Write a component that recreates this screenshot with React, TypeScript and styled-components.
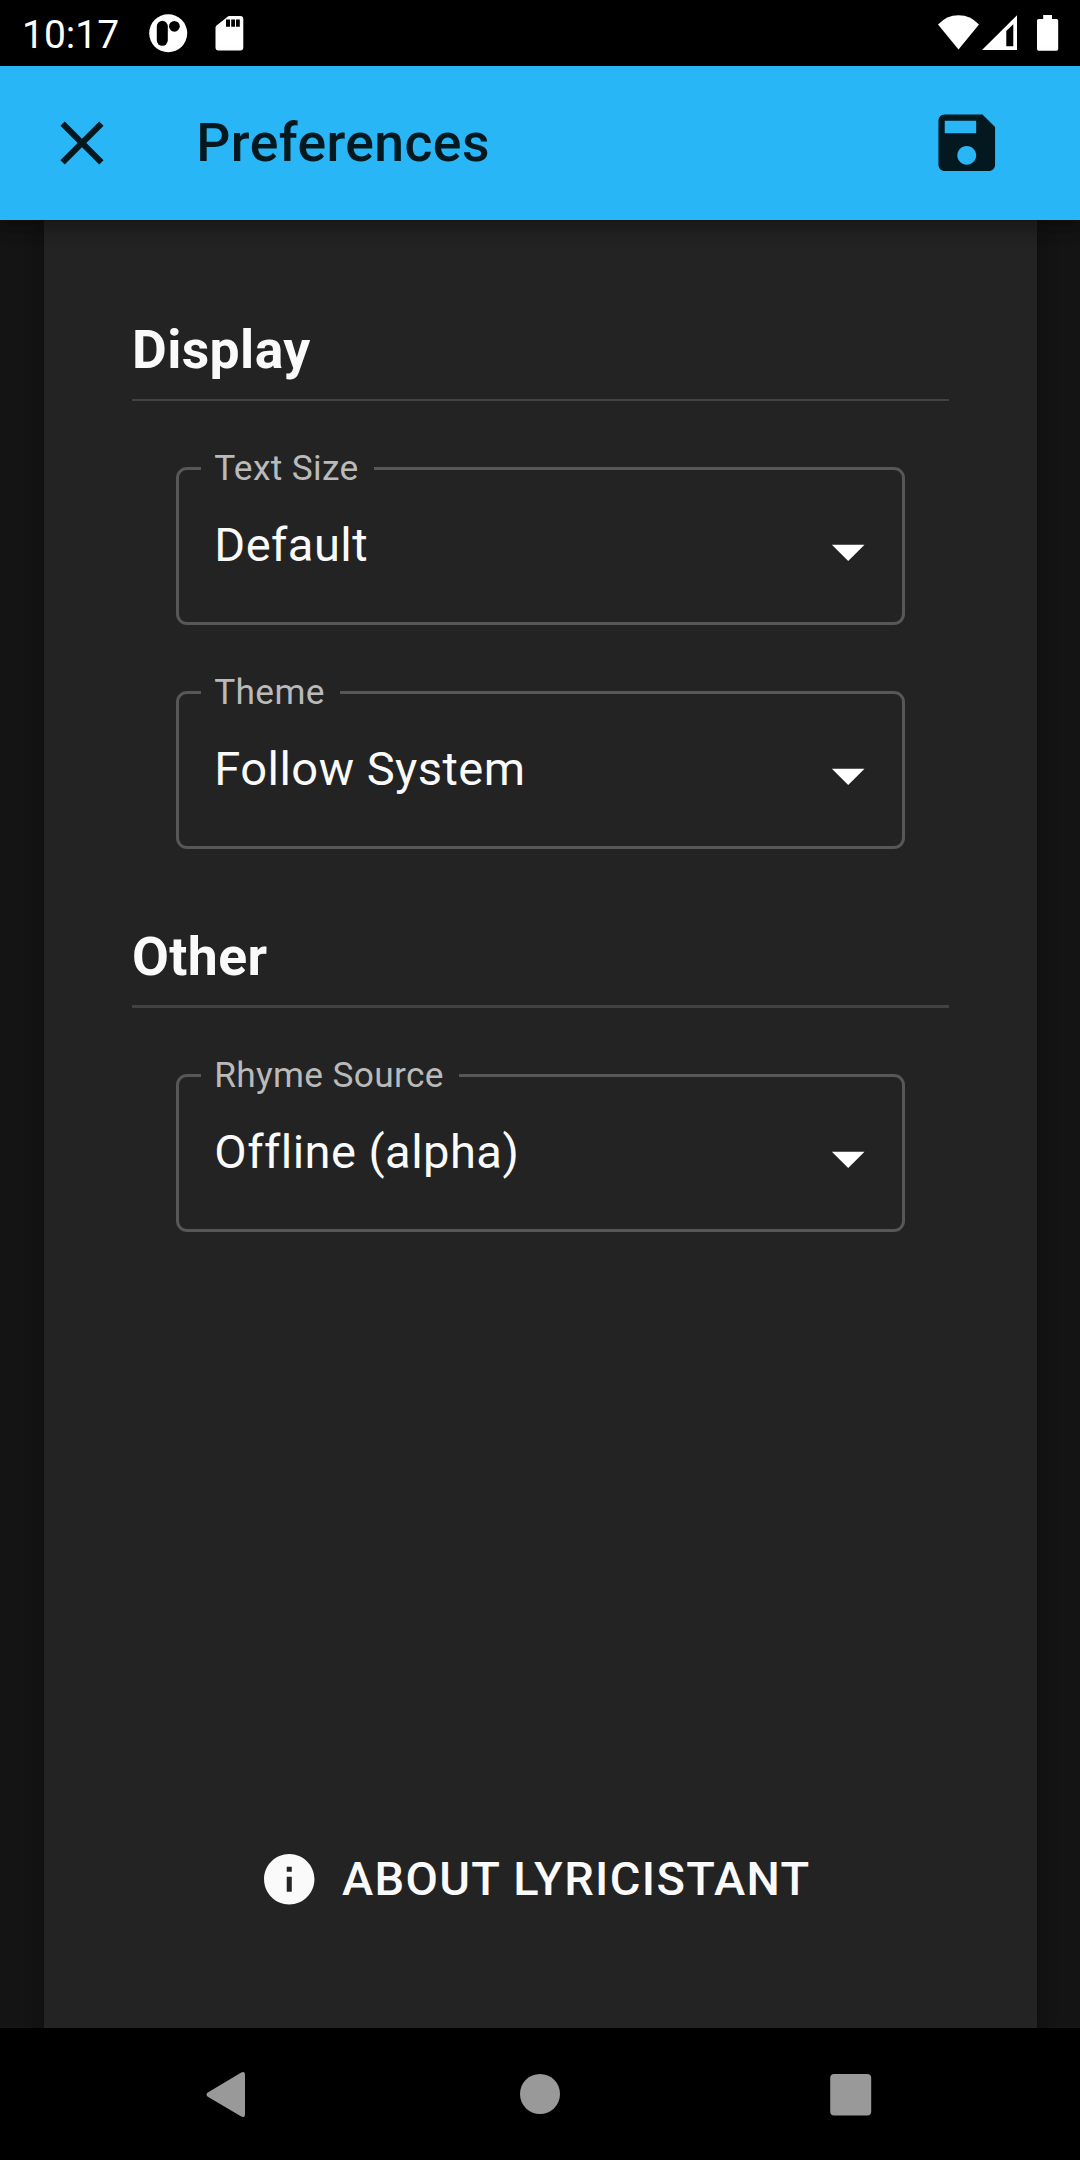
import React from "react";
import styled, { createGlobalStyle } from "styled-components";

const GlobalStyle = createGlobalStyle`
  *, *::before, *::after { box-sizing: border-box; }
  html, body { margin: 0; padding: 0; background: #141414; }
  body {
    font-family: Roboto, "Liberation Sans", sans-serif;
    -webkit-font-smoothing: antialiased;
  }
`;

const Screen = styled.div`
  display: flex;
  flex-direction: column;
  width: 1080px;
  height: 2160px;
  overflow: hidden;
  background: #141414;
`;

const StatusBar = styled.div`
  display: flex;
  flex: none;
  align-items: flex-start;
  height: 66px;
  padding-left: 22px;
  background: #000;
  color: #fff;
`;

const Clock = styled.span`
  width: 127px;
  font-size: 39px;
  line-height: 70px;
`;

const StatusIcons = styled.svg`
  flex: none;
  height: 66px;
`;

const Spacer = styled.div`
  flex: 1;
`;

const AppBar = styled.header`
  position: relative;
  z-index: 1;
  display: flex;
  flex: none;
  align-items: center;
  height: 154px;
  padding: 0 75.5px 0 45px;
  background: #29b6f6;
  color: #04191f;
  box-shadow:
    0 5.5px 11px -2.75px rgba(0, 0, 0, 0.2),
    0 11px 13.75px 0 rgba(0, 0, 0, 0.14),
    0 2.75px 27.5px 0 rgba(0, 0, 0, 0.12);
`;

const Title = styled.h1`
  flex: 1;
  margin: 0 0 0 77.3px;
  font-size: 53.5px;
  font-weight: 500;
  letter-spacing: 0.0075em;
  line-height: 86px;
`;

const Icon = styled.svg<{ $size: number }>`
  display: block;
  flex: none;
  width: ${(p) => p.$size}px;
  height: ${(p) => p.$size}px;
  fill: currentColor;
`;

const IconButton = styled.button`
  display: block;
  padding: 0;
  border: 0;
  background: none;
  color: inherit;
`;

const Panel = styled.main`
  display: flex;
  flex: 1;
  flex-direction: column;
  width: 993px;
  margin-left: 44px;
  padding: 98px 88px 100px;
  background: #232323;
  color: #fafafa;
  box-shadow:
    0 8.25px 8.25px -5.5px rgba(0, 0, 0, 0.2),
    0 8.25px 11px 0 rgba(0, 0, 0, 0.14),
    0 2.75px 22px 0 rgba(0, 0, 0, 0.12);
`;

const Section = styled.section`
  & + & {
    margin-top: 76px;
  }
`;

const SectionTitle = styled.h2<{ $rule: number }>`
  height: 83px;
  margin: 0;
  border-bottom: ${(p) => p.$rule}px solid #424242;
  font-size: 53.5px;
  font-weight: 700;
  letter-spacing: 0.0075em;
  line-height: 64px;
`;

const Fields = styled.div`
  display: flex;
  flex-direction: column;
  gap: 66px;
  padding: 66px 44px 0;
`;

const Outline = styled.fieldset`
  min-width: 0;
  height: 158px;
  margin: 0;
  padding: 0 0 0 22px;
  border: 3px solid #575757;
  border-radius: 11px;
`;

const Label = styled.legend`
  height: 3px;
  padding: 0 15px 0 13.2px;
  color: #bababa;
  font-size: 35.3px;
  letter-spacing: 0.00938em;
  line-height: 3px;
  white-space: nowrap;
`;

const SelectRow = styled.div`
  display: flex;
  align-items: center;
  justify-content: space-between;
  height: 152px;
  padding: 0 15px 0 13.3px;
`;

const Value = styled.span`
  margin-bottom: 2px;
  font-size: 47.1px;
  letter-spacing: 0.00938em;
  line-height: 56px;
`;

const Arrow = styled(Icon)`
  margin-top: 9.6px;
  color: #fff;
`;

const AboutButton = styled.button`
  display: flex;
  align-items: center;
  align-self: center;
  gap: 22px;
  height: 98px;
  margin-top: auto;
  padding: 0 0 1.6px;
  border: 0;
  background: none;
  color: #fafafa;
  font-family: inherit;
  font-size: 47px;
  font-weight: 500;
  letter-spacing: 0.02857em;
  text-transform: uppercase;
  white-space: nowrap;

  & > svg {
    margin: 2.4px 0 0 -11px;
  }
`;

const NavBar = styled.nav`
  display: flex;
  flex: none;
  align-items: flex-start;
  justify-content: space-between;
  height: 132px;
  padding: 33px 196px 0 195px;
  background: #000;
  color: #999;
`;

interface SelectProps {
  label: string;
  value: string;
}

function SelectField({ label, value }: SelectProps) {
  return (
    <Outline>
      <Label>{label}</Label>
      <SelectRow>
        <Value>{value}</Value>
        <Arrow $size={78.4} viewBox="0 0 24 24">
          <path d="M7 10l5 5 5-5z" />
        </Arrow>
      </SelectRow>
    </Outline>
  );
}

export default function App() {
  return (
    <>
      <GlobalStyle />
      <Screen>
        <StatusBar>
          <Clock>10:17</Clock>
          <StatusIcons width="100" viewBox="149 0 100 66">
            <circle cx="168.2" cy="33.2" r="19" fill="#fff" />
            <rect x="156.8" y="20.8" width="11" height="25" rx="5.5" fill="#000" />
            <circle cx="174.4" cy="26.3" r="5.4" fill="#000" />
            <path
              d="M229.5 16H240.3a3 3 0 0 1 3 3V47.5a3 3 0 0 1-3 3H218.5a3 3 0 0 1-3-3V27.5a3 3 0 0 1 1-2L227.3 17a3 3 0 0 1 2.2-1z"
              fill="#fff"
            />
            <path d="M226 19.5h4v7.3h-4zM231.2 19.5h3.8v7.3h-3.8zM236 19.5h3.8v7.3h-3.8z" fill="#000" />
          </StatusIcons>
          <Spacer />
          <StatusIcons width="142" viewBox="938 0 142 66">
            <path d="M958.5 49.5L938 24.5Q946.5 15.2 958.5 15.2T979 24.5z" fill="#fff" />
            <path d="M1017 15.2V50H982z" fill="#fff" />
            <path d="M1006.3 31L1013.3 24.2V46.3H1006.3z" fill="#000" />
            <path
              d="M1043.2 15H1052v4h4.5a1.7 1.7 0 0 1 1.7 1.7V49a1.7 1.7 0 0 1-1.7 1.7H1038.7A1.7 1.7 0 0 1 1037 49V20.7A1.7 1.7 0 0 1 1038.7 19h4.5z"
              fill="#fff"
            />
          </StatusIcons>
        </StatusBar>

        <AppBar>
          <IconButton aria-label="Close">
            <Icon $size={74} viewBox="0 0 24 24">
              <path d="M19 6.41L17.59 5 12 10.59 6.41 5 5 6.41 10.59 12 5 17.59 6.41 19 12 13.41 17.59 19 19 17.59 13.41 12z" />
            </Icon>
          </IconButton>
          <Title>Preferences</Title>
          <IconButton aria-label="Save">
            <Icon $size={75.5} viewBox="0 0 24 24">
              <path d="M17 3H5c-1.11 0-2 .9-2 2v14c0 1.1.89 2 2 2h14c1.1 0 2-.9 2-2V7l-4-4zm-5 16c-1.66 0-3-1.34-3-3s1.34-3 3-3 3 1.34 3 3-1.34 3-3 3zm3-10H5V5h10v4z" />
            </Icon>
          </IconButton>
        </AppBar>

        <Panel>
          <Section>
            <SectionTitle $rule={2}>Display</SectionTitle>
            <Fields>
              <SelectField label="Text Size" value="Default" />
              <SelectField label="Theme" value="Follow System" />
            </Fields>
          </Section>
          <Section>
            <SectionTitle $rule={3}>Other</SectionTitle>
            <Fields>
              <SelectField label="Rhyme Source" value="Offline (alpha)" />
            </Fields>
          </Section>
          <AboutButton>
            <Icon $size={60.5} viewBox="0 0 24 24">
              <path d="M12 2C6.48 2 2 6.48 2 12s4.48 10 10 10 10-4.48 10-10S17.52 2 12 2zm1 15h-2v-6h2v6zm0-8h-2V7h2v2z" />
            </Icon>
            About Lyricistant
          </AboutButton>
        </Panel>

        <NavBar>
          <Icon $size={66} viewBox="0 0 66 66">
            <path d="M46.3 11.5Q50 9.8 50 14V53Q50 57.3 46.3 55.6L12.8 35.7Q10.2 33.6 12.8 31.5z" />
          </Icon>
          <Icon $size={66} viewBox="0 0 66 66">
            <circle cx="33" cy="33" r="20" />
          </Icon>
          <Icon $size={66} viewBox="0 0 66 66">
            <rect x="12.2" y="13" width="41" height="41.5" rx="4" />
          </Icon>
        </NavBar>
      </Screen>
    </>
  );
}
